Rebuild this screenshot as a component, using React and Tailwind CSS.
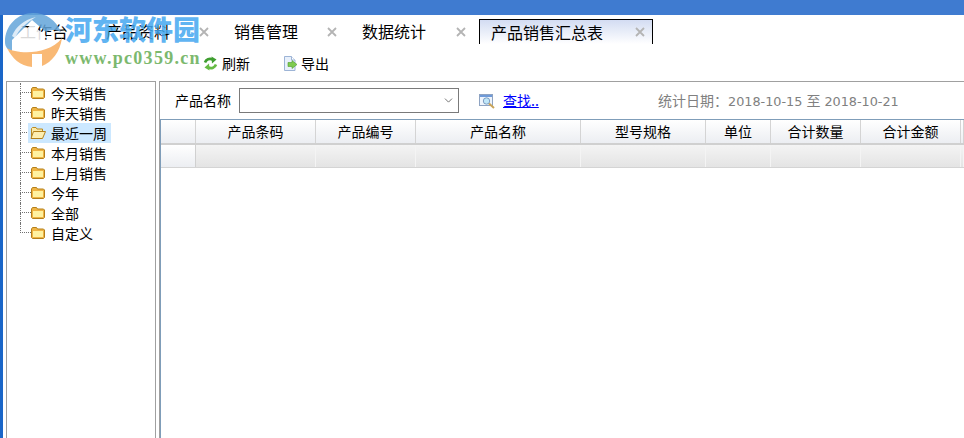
import { ChevronDown } from 'lucide-react';

const font = { fontFamily: '"Noto Sans CJK SC", "Liberation Sans", sans-serif' };
const latin = { fontFamily: '"DejaVu Sans", sans-serif' };

const tabs = [
  { label: '产品资料', tabW: 'w-[128px]', textW: 'w-[93px]' },
  { label: '销售管理', tabW: 'w-[128px]', textW: 'w-[93px]' },
  { label: '数据统计', tabW: 'w-[117px]', textW: 'w-[94px]' },
];

const treeItems = ['今天销售', '昨天销售', '最近一周', '本月销售', '上月销售', '今年', '全部', '自定义'];

const columns = [
  { label: '', w: 'w-[35px]' },
  { label: '产品条码', w: 'w-[120px]' },
  { label: '产品编号', w: 'w-[100px]' },
  { label: '产品名称', w: 'w-[165px]' },
  { label: '型号规格', w: 'w-[125px]' },
  { label: '单位', w: 'w-[65px]' },
  { label: '合计数量', w: 'w-[90px]' },
  { label: '合计金额', w: 'w-[100px]' },
  { label: '', w: 'flex-1' },
];

const CloseIcon = () => (
  <svg width="10" height="10" viewBox="0 0 10 10" className="shrink-0">
    <path d="M1 1l8 8M9 1l-8 8" stroke="#b4b4b4" strokeWidth="1.8" />
  </svg>
);

const Folder = ({ open }) =>
  open ? (
    <svg width="16" height="12" viewBox="0 0 16 12" className="shrink-0">
      <path d="M1.5 10.5V1.5L2.5 .5h3.5l1 1.5H12.5v2.5" fill="#fbe9a6" stroke="#b98a22" />
      <path d="M1 11.5L3.5 4.5H15.5L12.5 11.5z" fill="#fdeeb0" stroke="#b4801a" />
    </svg>
  ) : (
    <svg width="14" height="12" viewBox="0 0 14 12" className="shrink-0">
      <path d="M.5 2L1.5 .5h4L6.5 2h6l1 1V10.5l-1 1H1.5l-1-1z" fill="#f0b445" stroke="#b4801a" />
      <rect x="2" y="4" width="10" height="6" fill="#fff2a0" />
    </svg>
  );

const RefreshIcon = () => (
  <svg width="15" height="15" viewBox="0 0 15 15" fill="none" className="shrink-0">
    <path d="M2 6.5C3 3.5 6.5 2 9.5 3.5" stroke="#3f9e30" strokeWidth="2.6" />
    <path d="M8.5 .5L13.5 3.5L9 7.5z" fill="#3f9e30" />
    <path d="M13 8.5C12 11.5 8.5 13 5.5 11.5" stroke="#66bb44" strokeWidth="2.6" />
    <path d="M6.5 14.5L1.5 11.5L6 7.5z" fill="#66bb44" />
  </svg>
);

const ExportIcon = () => (
  <svg width="15" height="16" viewBox="0 0 15 16" className="shrink-0">
    <path d="M1.5 .5H8.5L12 4V14.5H1.5z" fill="#e8f0fb" stroke="#9db4d6" />
    <path d="M8.5 .5V4H12" fill="#fff" stroke="#9db4d6" />
    <path d="M5 6.5H9V4.5L14 8.5L9 12.5V10.5H5z" fill="#7ecb4f" stroke="#4f9a2e" strokeWidth=".6" />
  </svg>
);

const SearchIcon = () => (
  <svg width="17" height="16" viewBox="0 0 17 16" className="shrink-0">
    <rect x=".5" y="1.5" width="13" height="11" fill="#eef4fc" stroke="#8ea3c2" />
    <rect x="1" y="2" width="12" height="2" fill="#6f9ad8" />
    <circle cx="7.5" cy="8" r="3.2" fill="#bfe6f8" stroke="#7d9cc0" />
    <path d="M10 10.5l5 4.5" stroke="#c9a45a" strokeWidth="2" />
  </svg>
);

const Logo = () => (
  <svg width="61" height="56" viewBox="0 0 61 56" className="shrink-0">
    <path d="M1 30C1 13 14 1 29 1C42 1 52 8 57 20C50 17 46 18 42 20L28 8L8 28V40C4 38 1 35 1 30z" fill="#63a5da" />
    <path d="M28 12L44 26H39V36C30 38 20 38 14 37V26H11z" fill="#fff" />
    <path d="M8 24C12 14 20 8 32 5C22 11 15 17 11 26z" fill="#fff" opacity=".75" />
    <path d="M3 36C12 42 44 44 58 26C56 40 48 50 38 54V42H28V55C16 54 8 46 3 36z" fill="#f9ad5e" />
  </svg>
);

const Watermark = () => (
  <div className="pointer-events-none absolute left-[4px] top-[12px] flex opacity-85">
    <Logo />
    <div className="flex flex-col">
      <span className="text-[27px] leading-[34px] font-black text-[#45a8f0]" style={font}>
        河东软件园
      </span>
      <span
        className="mt-[3px] text-[18px] leading-[18px] font-bold tracking-[1.3px] text-[#66ad55]"
        style={{ fontFamily: '"Liberation Serif", serif' }}
      >
        www.pc0359.cn
      </span>
    </div>
  </div>
);

const TreeRow = ({ label, last, selected }) => (
  <div className="flex h-5 items-center">
    <div className="flex h-5 w-[11px] shrink-0 flex-col">
      <div className="h-[10px] border-b border-l border-dotted border-[#707070]" />
      <div className={`h-[10px] ${last ? '' : 'border-l border-dotted border-[#707070]'}`} />
    </div>
    {selected ? (
      <div className="ml-[-3px] flex h-5 w-[83px] items-center bg-[#cce8ff]">
        <span className="ml-[2px]"><Folder open /></span>
        <span className="ml-[5px] text-[14px] leading-5 text-black">{label}</span>
      </div>
    ) : (
      <>
        <Folder />
        <span className="ml-[6px] text-[14px] leading-5 text-black">{label}</span>
      </>
    )}
  </div>
);

export default function App() {
  return (
    <div className="relative h-[438px] w-[964px] overflow-hidden bg-white" style={font}>
      <div className="h-[15px] bg-[#3f7bd0]" />
      <div className="flex h-[423px]">
        <div className="w-[3px] bg-[#1a66c8]" />
        <div className="flex min-w-0 flex-1 flex-col">
          {/* Tabs */}
          <div className="mt-[4px] flex h-[25px] items-center">
            <span className="ml-[17px] w-[86px] text-[16px] leading-[25px] text-black">工作台</span>
            {tabs.map((tab) => (
              <div key={tab.label} className={`flex items-center ${tab.tabW}`}>
                <span className={`text-[16px] leading-[25px] text-black ${tab.textW}`}>{tab.label}</span>
                <CloseIcon />
              </div>
            ))}
            <div className="flex h-[25px] w-[174px] items-center border-x border-t border-black bg-gradient-to-b from-[#d3dcf2] to-white pl-[11px]">
              <span className="w-[144px] text-[16px] leading-[24px] text-black">产品销售汇总表</span>
              <CloseIcon />
            </div>
          </div>
          {/* Toolbar */}
          <div className="mt-[7px] flex h-[25px] items-center text-[14px] text-black">
            <span className="ml-[200px]"><RefreshIcon /></span>
            <span className="ml-[4px] w-[28px]">刷新</span>
            <span className="ml-[33px]"><ExportIcon /></span>
            <span className="ml-[3px]">导出</span>
          </div>
          {/* Body */}
          <div className="mt-[5px] flex min-h-0 flex-1">
            <div className="ml-[3px] w-[150px] border border-b-0 border-[#a0a0a0] bg-white pl-[13px] pt-[1px]">
              {treeItems.map((item, i) => (
                <TreeRow key={item} label={item} last={i === treeItems.length - 1} selected={item === '最近一周'} />
              ))}
            </div>
            <div className="ml-[3px] flex min-w-0 flex-1 flex-col border-l border-t border-[#a0a0a0]">
              {/* Filter bar */}
              <div className="flex h-[37px] items-center">
                <span className="ml-[15px] w-[64px] text-[14px] text-black">产品名称</span>
                <div className="flex h-[25px] w-[220px] items-center justify-end border border-[#7a7a7a] pr-[3px]">
                  <ChevronDown size={13} strokeWidth={1.5} className="text-[#555]" />
                </div>
                <span className="ml-[20px]"><SearchIcon /></span>
                <span className="ml-[7px] w-[155px] text-[14px] text-[#0000ff] underline">查找..</span>
                <span className="text-[14px] text-[#808080]">
                  统计日期：
                  <span style={latin} className="text-[12.8px]">2018-10-15</span>
                  <span className="mx-[4px]">至</span>
                  <span style={latin} className="text-[12.8px]">2018-10-21</span>
                </span>
              </div>
              {/* Grid */}
              <div className="flex min-h-0 flex-1 flex-col border-l border-t border-[#7f9db9]">
                <div className="flex h-[25px] border-b-2 border-[#d0d0d0]">
                  {columns.map((col, i) => (
                    <div
                      key={i}
                      className={`${col.w} flex items-center justify-center border-r border-[#d4d4d4] bg-gradient-to-b from-white to-[#eceef2] text-[14px] text-black`}
                    >
                      {col.label}
                    </div>
                  ))}
                </div>
                <div className="flex h-[23px] border-b border-[#d4d4d4]">
                  {columns.map((col, i) => (
                    <div
                      key={i}
                      className={`${col.w} border-r ${i === 0 ? 'border-[#d0d0d0] bg-gradient-to-b from-white to-[#eceef2]' : 'border-[#f4f4f4] bg-gradient-to-b from-[#f4f4f4] to-[#e4e4e4]'}`}
                    />
                  ))}
                </div>
              </div>
            </div>
          </div>
        </div>
      </div>
      <Watermark />
    </div>
  );
}
